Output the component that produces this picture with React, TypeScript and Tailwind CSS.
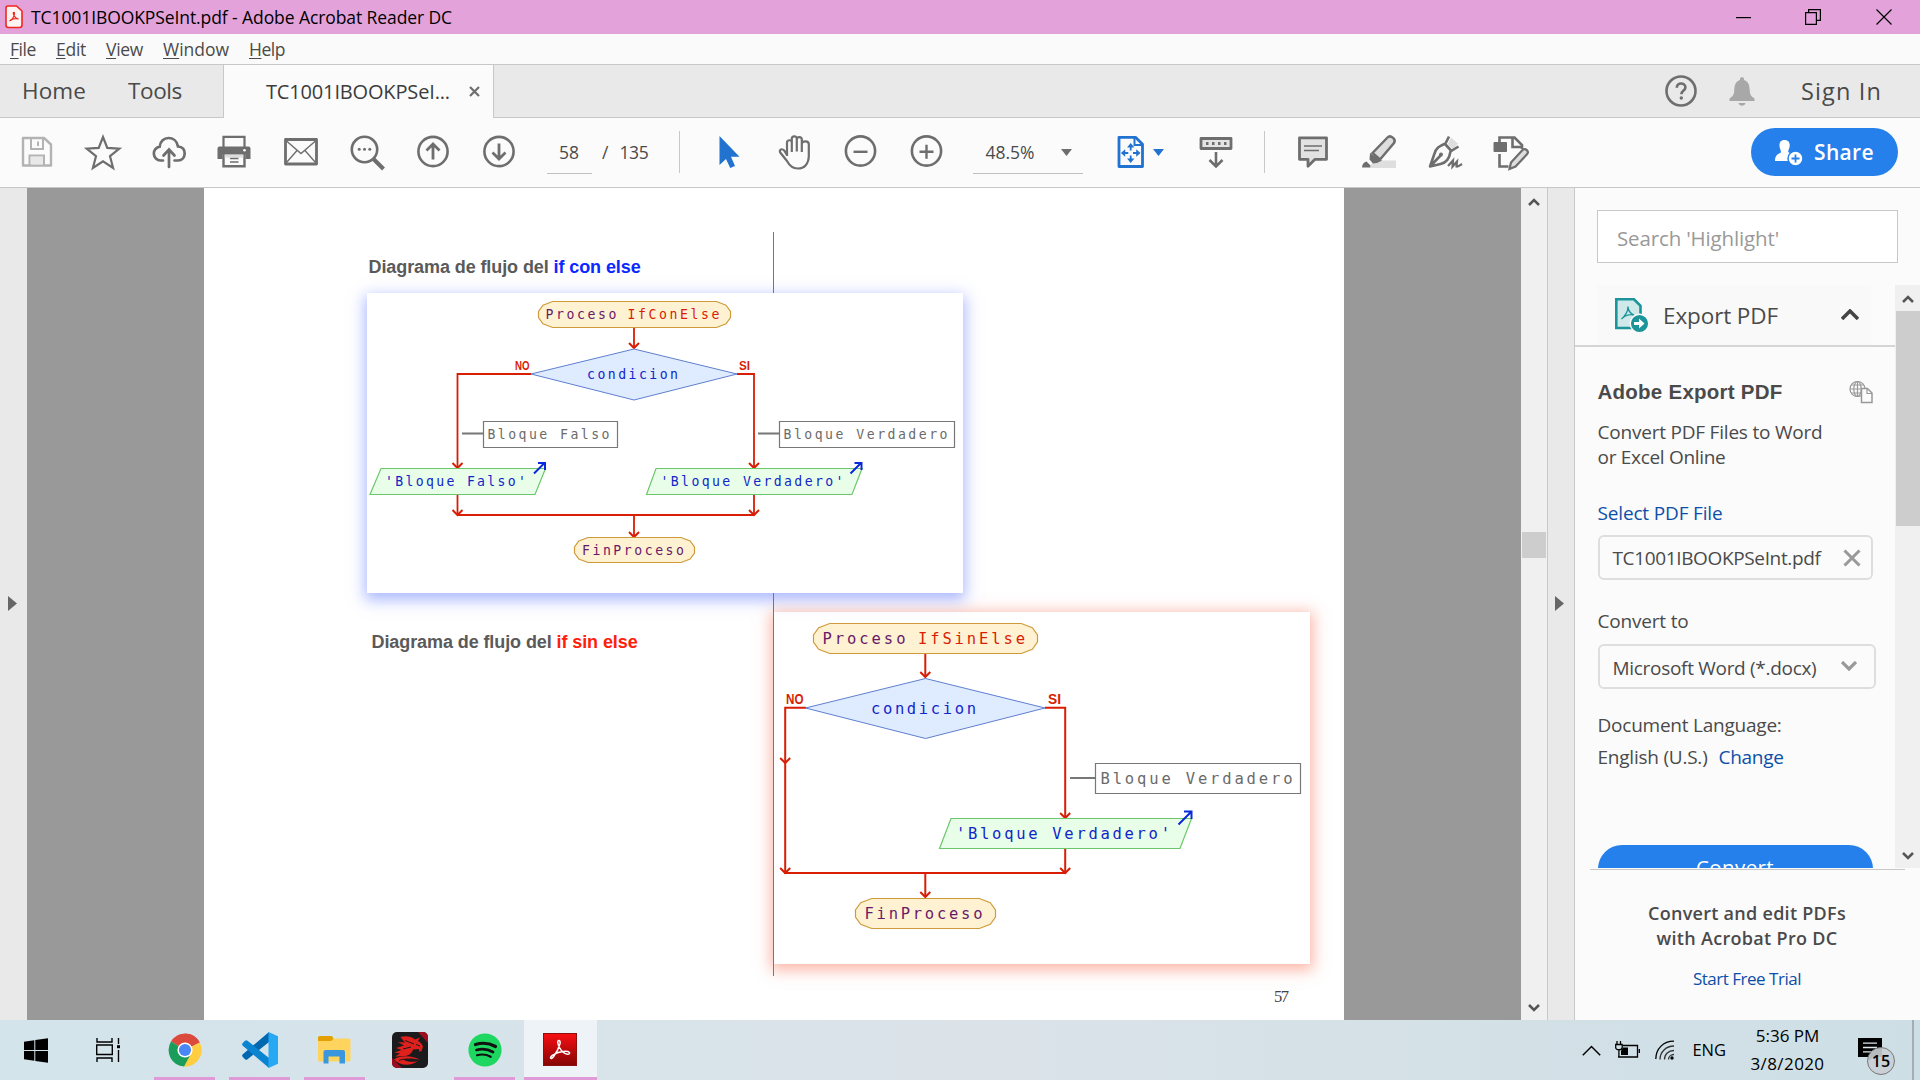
import React from "react";

const G = "#6e6e6e";

function Icon({ children, w = 36, h = 36 }: { children: React.ReactNode; w?: number; h?: number }) {
  return (
    <svg width={w} height={h} viewBox={`0 0 ${w} ${h}`} fill="none" className="block shrink-0 overflow-visible">
      {children}
    </svg>
  );
}

function Slot({ children }: { children: React.ReactNode }) {
  return <div className="flex h-full w-[66px] shrink-0 items-center justify-center">{children}</div>;
}

/* ---------- title, menu and tabs ---------- */

function TitleBar() {
  return (
    <div className="flex h-[34px] items-center bg-[#e3a3da] pl-[5px] text-black">
      <svg width="18" height="24" viewBox="0 0 18 24" fill="none">
        <path d="M3 1h8.500L17 6v14a2.500 2.500 0 0 1-2.500 2.500h-11A2.500 2.500 0 0 1 1 20V3a2 2 0 0 1 2-2z" fill="#fff4f4" stroke="#f0261c" strokeWidth="1.600" />
        <path d="M4.500 16c2-.6 4.600-3.500 5-7.500.1-1.500-1.600-1.500-1.200.2.6 2.800 3 5.300 5.400 5.300M4.500 16c1.500-2 6-3 9-2" stroke="#f0261c" strokeWidth="1.200" />
      </svg>
      <span className="ml-[8px] whitespace-nowrap text-[17.500px] tracking-[-0.09px]">TC1001IBOOKPSeInt.pdf - Adobe Acrobat Reader DC</span>
      <div className="ml-auto flex items-center">
        <svg width="16" height="16" viewBox="0 0 16 16" className="mr-[53px]"><path d="M0 8h15v1.200H0z" fill="#000" /></svg>
        <svg width="16" height="16" viewBox="0 0 16 16" fill="none" stroke="#000" strokeWidth="1.200" className="mr-[55px]">
          <path d="M.6 3.600h10.800v11.800H.6zM3.600 3.600V.6h11.800v10.800h-3.800" />
        </svg>
        <svg width="16" height="16" viewBox="0 0 16 16" fill="none" stroke="#000" strokeWidth="1.200" className="mr-[28px]">
          <path d="M.5.5l15 15M15.500.5l-15 15" />
        </svg>
      </div>
    </div>
  );
}

function MenuBar() {
  return (
    <div className="flex h-[30px] whitespace-nowrap bg-[#fafafa] pl-[10px] text-[17.500px] leading-[30px] text-[#4a4a4a]">
      <div className="w-[46px] tracking-[-0.430px]"><u className="underline-offset-2">F</u>ile</div>
      <div className="w-[50px] tracking-[-0.280px]"><u className="underline-offset-2">E</u>dit</div>
      <div className="w-[57px] tracking-[-0.310px]"><u className="underline-offset-2">V</u>iew</div>
      <div className="w-[86px]"><u className="underline-offset-2">W</u>indow</div>
      <div className="tracking-[-0.460px]"><u className="underline-offset-2">H</u>elp</div>
    </div>
  );
}

function TabBar() {
  return (
    <div className="flex h-[54px] border-y border-[#c8c8c8] bg-[#e9e9e9] text-[#4a4a4a]">
      <div className="flex w-[223px] whitespace-nowrap pl-[22px] text-[22.500px] leading-[52px]">
        <div className="w-[106px] tracking-[0.100px]">Home</div>
        <span className="tracking-[-0.380px]">Tools</span>
      </div>
      <div className="relative -mb-px flex w-[271px] items-center border-x border-[#c8c8c8] bg-[#fbfbfb] pl-[42px] text-[20px] leading-[52px] text-[#3c3c3c]">
        <span className="whitespace-nowrap tracking-[-0.160px]">TC1001IBOOKPSeI...</span>
        <svg width="11" height="11" viewBox="0 0 11 11" stroke={G} strokeWidth="2.200" className="mb-px ml-auto mr-[13px]"><path d="M1 1l9 9M10 1l-9 9" /></svg>
      </div>
      <div className="ml-auto flex items-center pr-[37px]">
        <Icon>
          <circle cx="18" cy="18" r="14.500" stroke={G} strokeWidth="2.600" />
          <path d="M13.800 14.800c0-5.800 8.600-5.400 8.600-.4 0 3-4 3.300-4 6.800" stroke={G} strokeWidth="2.600" />
          <circle cx="18.300" cy="25" r="1.700" fill={G} />
        </Icon>
        <div className="ml-[25px]">
          <Icon>
            <path d="M16 6c0-2.500 4-2.500 4 0v1c5 1.500 5.500 6 5.800 11 .2 4 1.500 5.500 4.700 7.500V28h-25v-2.500c3.200-2 4.500-3.500 4.700-7.500.3-5 .8-9.500 5.800-11z" fill="#a8a8a8" />
            <path d="M14.500 30h7c-.5 3.600-6.500 3.600-7 0z" fill="#a8a8a8" />
          </Icon>
        </div>
        <span className="ml-[41px] mt-[2px] w-[82px] whitespace-nowrap text-[23.500px] tracking-[1.150px]">Sign In</span>
      </div>
    </div>
  );
}

/* ---------- toolbar ---------- */

function Toolbar() {
  return (
    <div className="flex h-[70px] items-center border-b border-[#c8c8c8] bg-[#fbfbfb] pb-px pl-[4px] text-[17.500px] text-[#4a4a4a]">
      <Slot>
        <Icon>
          <path d="M4 4h21l7 6.500V31.500H4z" stroke="#b3b3b3" strokeWidth="2.400" strokeLinejoin="round" />
          <path d="M12 4v11h12V4M10.500 31V21.500H25V31" stroke="#b3b3b3" strokeWidth="2" />
          <path d="M12 23h12v7.500H12z" fill="#e8e8e8" />
          <path d="M19 7.500v4.500" stroke="#b3b3b3" strokeWidth="2" />
        </Icon>
      </Slot>
      <Slot>
        <Icon>
          <path d="M18 3l4.300 10.900 12 .7-9.300 7.600 3.100 11.800L18 27.400 7.900 34 11 22.200 1.700 14.600l12-.7z" stroke={G} strokeWidth="2.200" />
        </Icon>
      </Slot>
      <Slot>
        <Icon>
          <path d="M12 26.500H9.500a7 7 0 0 1-.8-13.900C9.500 1.500 25 .8 27 12.500c9.300 0 8.500 14 0 14h-3.500" stroke={G} strokeWidth="2.700" strokeLinecap="round" />
          <path d="M18 33V16.500M12.500 21.500l5.500-6 5.500 6" stroke={G} strokeWidth="2.700" strokeLinecap="round" />
        </Icon>
      </Slot>
      <Slot>
        <div className="mr-[3px]">
          <Icon>
            <path d="M7.500 14V2.800h21V14" stroke={G} strokeWidth="2.200" />
            <path d="M3.500 12.500h29a2 2 0 0 1 2 2V25h-5v-5h-23v5h-5V14.500a2 2 0 0 1 2-2z" fill={G} />
            <circle cx="28.500" cy="16.300" r="1.300" fill="#fff" />
            <path d="M7.500 19.500h21v12.700h-21z" fill="#fbfbfb" stroke={G} strokeWidth="2.400" />
            <path d="M8.700 20.500h18.600v3H8.700z" fill="#ddd" />
            <path d="M14 24.500h8.500M14 28h8.500" stroke={G} strokeWidth="1.400" />
          </Icon>
        </div>
      </Slot>
      <Slot>
        <Icon>
          <path d="M2.500 5.500h31v24.500h-31z" stroke={G} strokeWidth="2.800" strokeLinejoin="round" />
          <path d="M3.500 7L18 19.500 32.500 7M3.500 28.500L14 16.500M32.500 28.500L22 16.500" stroke={G} strokeWidth="1.400" />
        </Icon>
      </Slot>
      <Slot>
        <Icon>
          <circle cx="15.500" cy="15.500" r="12.700" stroke={G} strokeWidth="2.600" />
          <path d="M24.500 25l10 10" stroke={G} strokeWidth="4" />
          <circle cx="10.200" cy="15.200" r="1.500" fill={G} /><circle cx="15.500" cy="15.200" r="1.500" fill={G} /><circle cx="20.800" cy="15.200" r="1.500" fill={G} />
        </Icon>
      </Slot>
      <Slot>
        <Icon>
          <circle cx="18" cy="17.500" r="14.600" stroke={G} strokeWidth="2.600" />
          <path d="M18 25.500V11M11.500 16.500L18 10l6.500 6.500" stroke={G} strokeWidth="2.800" />
        </Icon>
      </Slot>
      <Slot>
        <Icon>
          <circle cx="18" cy="17.500" r="14.600" stroke={G} strokeWidth="2.600" />
          <path d="M18 9.500V24M11.500 18.500L18 25l6.500-6.500" stroke={G} strokeWidth="2.800" />
        </Icon>
      </Slot>
      <div className="ml-[15px] mt-[3px] flex h-[40px] w-[45px] items-center justify-center border-b border-[#c0c0c0] pb-px pr-px">58</div>
      <span className="ml-[10px]">/</span>
      <span className="ml-[11px] w-[29px] whitespace-nowrap tracking-[-0.340px]">135</span>
      <div className="ml-[31px] h-[42px] w-px bg-[#c8c8c8]" />
      <div className="ml-[16px] flex h-full">
        <Slot>
          <Icon>
            <path d="M9 2.500v29l6.500-6 4.200 9 4.800-2-4-9.300h8.500z" fill="#2173cf" transform="translate(-.5 -.5)" />
          </Icon>
        </Slot>
        <Slot>
          <Icon>
            <path d="M10 22V8.500c0-3 4.800-3 4.800 0V18M14.800 15V4.800c0-3.300 5-3.300 5 0v12.700M19.800 15V5.500c0-3.200 5-3.200 5 0V18M24.800 17V9.800c0-3.300 7-3.300 7 .5v11.500c0 8-4.500 12.700-11 12.700-5.500 0-8.300-2.800-10.800-7.500L3.200 18.500c-1.500-3.300 2-4.200 4-2L10 21" stroke={G} strokeWidth="2.200" strokeLinejoin="round" />
          </Icon>
        </Slot>
        <Slot>
          <Icon>
            <circle cx="17.500" cy="17" r="14.600" stroke={G} strokeWidth="2.600" />
            <path d="M10.500 17.800h14" stroke={G} strokeWidth="2.400" />
          </Icon>
        </Slot>
        <Slot>
          <Icon>
            <circle cx="17.500" cy="17" r="14.600" stroke={G} strokeWidth="2.600" />
            <path d="M10.500 17.800h14M17.500 10.800v14" stroke={G} strokeWidth="2.400" />
          </Icon>
        </Slot>
      </div>
      <div className="ml-[13px] mt-[3px] flex h-[40px] w-[110px] items-center border-b border-[#c0c0c0] pb-px pl-[12px]">
        <span className="whitespace-nowrap">48.5%</span>
        <svg width="11" height="7" viewBox="0 0 11 7" className="ml-auto mr-[11px]"><path d="M0 0h11L5.500 7z" fill={G} /></svg>
      </div>
      <div className="ml-[30px] flex items-center">
        <Icon>
          <path d="M6 3.300h16.500l7 7V32.500H6z" stroke="#2173cf" strokeWidth="2.800" strokeLinejoin="round" />
          <path d="M21.500 3.500v7.500h7.500" stroke="#2173cf" strokeWidth="2" />
          <path d="M17.700 9l3.700 4.500H14zM17.700 29l3.700-4.500H14zM7.900 19l4.300-3.700v7.400zM27.500 19l-4.300-3.700v7.400z" fill="#2173cf" />
          <path d="M17.700 12v4.500M17.700 21.500V26M11 19h4.300M20 19h4.300" stroke="#2173cf" strokeWidth="1.800" />
        </Icon>
        <svg width="11" height="7" viewBox="0 0 11 7" className="ml-[4px]"><path d="M0 0h11L5.500 7z" fill="#2173cf" /></svg>
      </div>
      <div className="ml-[34px]">
        <Icon>
          <path d="M3 4.500h30v10H3z" fill="#e4e4e4" stroke={G} strokeWidth="2.800" strokeLinejoin="round" />
          <path d="M8 9.500h2.500M14 9.500h2.500M20 9.500h2.500M26 9.500h2.500" stroke={G} strokeWidth="3" />
          <path d="M18 18v14M11.500 26l6.500 6.500 6.500-6.500" stroke={G} strokeWidth="2.600" />
        </Icon>
      </div>
      <div className="ml-[30px] h-[42px] w-px bg-[#c8c8c8]" />
      <div className="ml-[15px] flex h-full">
        <Slot>
          <Icon>
            <path d="M4.500 3.800h27v21.500H20l-7 7v-7H4.500z" fill="#e2e2e2" stroke={G} strokeWidth="2.800" strokeLinejoin="round" />
            <path d="M9 12h18M9 16.500h15" stroke={G} strokeWidth="1.500" />
          </Icon>
        </Slot>
        <Slot>
          <Icon>
            <path d="M13 26.500h22V34H8z" fill="#dedede" />
            <path d="M11.500 19L26.500 3.500c3-3 9 1.500 6.500 5.500L19 25.500z" fill="#dedede" stroke={G} strokeWidth="2.500" />
            <path d="M9 19l12 7.500-5 2.500-4 .5-3.500-4z" fill={G} />
            <path d="M1 33.500c0-3 2-5.500 4.500-6l4 4-.5 2z" fill={G} />
          </Icon>
        </Slot>
        <Slot>
          <Icon>
            <path d="M21 10l3-6.500 7 6-5 6z" fill="#dedede" />
            <path d="M22 2.500l-3.500 7c-6 2.500-10 4.500-11.500 11.500L3 32.500 13.500 30c5.500-1 9-6 10-12.500l8-5M18 10l6 6.500M3.500 32L14 21" stroke={G} strokeWidth="2.600" strokeLinejoin="round" />
            <circle cx="14" cy="20.500" r="2" fill={G} />
            <path d="M21 32l5-5.500-.5 6 4.500-5-.5 5c2 .5 4-1.500 5.500-2.500" stroke={G} strokeWidth="2.200" />
          </Icon>
        </Slot>
        <Slot>
          <Icon>
            <path d="M6.500 9V3.500h15L29 11v4M19.500 3.500V13H29M6.500 20v12.500h9" stroke={G} strokeWidth="2.600" />
            <path d="M1 8.500h12.500v9H1z" fill={G} stroke={G} strokeWidth="1" />
            <path d="M18 28.500l11.500-12.500c3-2.500 7 1.500 4.500 4.200L22.500 32.500 16.500 35z" fill="#dedede" stroke={G} strokeWidth="2.200" />
          </Icon>
        </Slot>
      </div>
      <button className="ml-auto mr-[22px] flex h-[48px] w-[147px] items-center rounded-full bg-[#2680eb] pl-[24px] text-white">
        <svg width="28" height="27" viewBox="0 0 28 27" fill="none">
          <path d="M9.500 1c4.200 0 5.500 3 5.200 6-.2 2.500-1.500 4-1.500 6l4 2.500-3 6.500H0c0-5 2-6.500 6-8.500 0-2.500-1.500-4-1.500-6.500C4.200 4 5.300 1 9.500 1z" fill="#fff" />
          <circle cx="20.500" cy="19.500" r="7.500" fill="#fff" stroke="#2680eb" strokeWidth="1.500" />
          <path d="M16.500 19.500h8M20.500 15.500v8" stroke="#2680eb" strokeWidth="1.800" />
        </svg>
        <span className="ml-[11px] mt-px whitespace-nowrap text-[21px] font-semibold tracking-[0.350px]">Share</span>
      </button>
    </div>
  );
}

/* ---------- flow chart parts ---------- */

const RED = "#d81e05";
const MONO = "'DejaVu Sans Mono', monospace";
const NARROW = 0.94;

/* Narrow letters set wide apart, as the chart's own monospace face has them. */
function Txt({ x, y, w, s, size, fill }: { x: number; y: number; w: number; s: string; size: number; fill: string }) {
  return (
    <text
      transform={`translate(${x} ${y}) scale(${NARROW} 1)`}
      textLength={(w - 1) / NARROW}
      fontSize={size}
      fill={fill}
      fontFamily={MONO}
      xmlSpace="preserve"
    >
      {s}
    </text>
  );
}

function Branch({ x, y, w, s, size }: { x: number; y: number; w: number; s: string; size: number }) {
  return (
    <text x={x} y={y} textLength={w} lengthAdjust="spacingAndGlyphs" fontSize={size} fill={RED} fontFamily="'Liberation Sans', sans-serif" fontWeight={700}>
      {s}
    </text>
  );
}

function Terminal({ x1, x2, y1, y2 }: { x1: number; x2: number; y1: number; y2: number }) {
  const h = y2 - y1;
  const m = (y1 + y2) / 2;
  const c = h * 0.54;
  const i = c * 0.32;
  const j = h * 0.14;
  const f = h * 0.12;
  return (
    <polygon
      points={`${x1 + c},${y1} ${x2 - c},${y1} ${x2 - i},${y1 + j} ${x2},${m - f} ${x2},${m + f} ${x2 - i},${y2 - j} ${x2 - c},${y2} ${x1 + c},${y2} ${x1 + i},${y2 - j} ${x1},${m + f} ${x1},${m - f} ${x1 + i},${y1 + j}`}
      fill="#fff2d2" stroke="#cf9a3a" strokeWidth="1.200"
    />
  );
}

function Head({ x, y, r = 5 }: { x: number; y: number; r?: number }) {
  return <path d={`M${x - r} ${y - r}L${x} ${y}L${x + r} ${y - r}`} fill="none" stroke={RED} strokeWidth="2" />;
}

function ChartConElse() {
  return (
    <svg width="596" height="300" viewBox="367 293 596 300" className="block">
      <Terminal x1={538.500} x2={730.500} y1={301.500} y2={327.500} />
      <Txt x={545.500} y={319} w={72} s="Proceso" size={14} fill="#681a68" />
      <Txt x={627.500} y={319} w={93} s="IfConElse" size={14} fill={RED} />
      <path d="M634 328v20M531 374H457.500V468M737 374h17V468M457.500 495v20M754 495v20M457 515h297M634 515v22" stroke={RED} strokeWidth="1.800" fill="none" />
      <Head x={634} y={348} /><Head x={457.500} y={468} /><Head x={754} y={468} />
      <Head x={457.500} y={515} /><Head x={754} y={515} /><Head x={634} y={537} />
      <polygon points="634,349 737,374 634,400 531,374" fill="#dfebff" stroke="#5f7fd0" />
      <Txt x={587} y={379} w={92} s="condicion" size={14} fill="#1226c8" />
      <Branch x={515} y={370} w={14.500} s="NO" size={12.500} />
      <Branch x={739} y={370} w={11} s="SI" size={12.500} />
      <path d="M462 433.500h21M758 433.500h21.500" stroke="#777" strokeWidth="2" />
      <path d="M483.500 421.500h134v26h-134zM779.500 421.500h175v26h-175z" fill="#fff" stroke="#777" strokeWidth="1.200" />
      <Txt x={487.500} y={439} w={123} s="Bloque Falso" size={14} fill="#6b6b6b" />
      <Txt x={783.500} y={439} w={165} s="Bloque Verdadero" size={14} fill="#6b6b6b" />
      <path d="M381 468.500h164.500l-10.500 26H370zM656 468.500h206l-10 26H646.500z" fill="#e8fee8" stroke="#6cc76c" strokeWidth="1.200" />
      <Txt x={385} y={486} w={142} s="'Bloque Falso'" size={14} fill="#1226c8" />
      <Txt x={660.500} y={486} w={184} s="'Bloque Verdadero'" size={14} fill="#1226c8" />
      <path d="M534 473.500L544.500 463M538 463h7v7M850.500 473.500L861 463M854.500 463h7v7" stroke="#0a28dc" strokeWidth="2" fill="none" />
      <Terminal x1={574.500} x2={694.500} y1={537.500} y2={562.500} />
      <Txt x={582} y={555} w={103} s="FinProceso" size={14} fill="#681a68" />
    </svg>
  );
}

function ChartSinElse() {
  return (
    <svg width="536" height="352" viewBox="774 612 536 352" className="block">
      <Terminal x1={813.500} x2={1037.500} y1={623.500} y2={653.500} />
      <Txt x={822.500} y={644} w={84} s="Proceso" size={16.500} fill="#681a68" />
      <Txt x={918} y={644} w={108} s="IfSinElse" size={16.500} fill={RED} />
      <path d="M925.300 654v23M806 707.700H785.200V873M1045 707.700h20.200V818M1065.200 849v24M784.200 873h282M925.300 873v24" stroke={RED} strokeWidth="2" fill="none" />
      <Head x={925.300} y={677} /><Head x={785.200} y={763} /><Head x={785.200} y={873} />
      <Head x={1065.200} y={818} /><Head x={1065.200} y={873} /><Head x={925.300} y={897} />
      <polygon points="925.500,678.500 1045,708 925.500,738.500 805.500,708" fill="#dfebff" stroke="#5f7fd0" />
      <Txt x={871} y={714} w={106} s="condicion" size={16.500} fill="#1226c8" />
      <Branch x={786} y={703.500} w={17.500} s="NO" size={15} />
      <Branch x={1048} y={703.500} w={13} s="SI" size={15} />
      <path d="M1070 778h25" stroke="#777" strokeWidth="2" />
      <path d="M1095.500 763.500h205v30h-205z" fill="#fff" stroke="#777" strokeWidth="1.200" />
      <Txt x={1100.500} y={784} w={193} s="Bloque Verdadero" size={16.500} fill="#6b6b6b" />
      <path d="M951 818.500h240.500l-11.500 30H939.500z" fill="#e8fee8" stroke="#6cc76c" strokeWidth="1.200" />
      <Txt x={956} y={839} w={215} s="'Bloque Verdadero'" size={16.500} fill="#1226c8" />
      <path d="M1178.500 824.500L1191 812M1184 811.500h7.500v7.500" stroke="#0a28dc" strokeWidth="2" fill="none" />
      <Terminal x1={855.500} x2={995.500} y1={898.500} y2={928.500} />
      <Txt x={864.500} y={919} w={119} s="FinProceso" size={16.500} fill="#681a68" />
    </svg>
  );
}

/* The PDF page is a free canvas, its origin at the sheet's top left corner. */
function PdfPage() {
  return (
    <div className="relative h-full w-[1140px] overflow-hidden bg-white font-['Liberation_Sans',sans-serif]">
      <div className="absolute left-[570px] top-[424px] h-[352px] w-[536px] bg-white shadow-[0_3px_14px_3px_rgba(250,110,80,0.5)]">
        <ChartSinElse />
      </div>
      <div className="absolute left-[569px] top-[44px] h-[744px] w-px bg-[#777]" />
      <div className="absolute left-[163px] top-[105px] h-[300px] w-[596px] bg-white shadow-[0_5px_14px_2px_rgba(90,115,255,0.5)]">
        <ChartConElse />
      </div>
      <p className="absolute left-[164.500px] top-[67px] whitespace-nowrap text-[18px] font-bold leading-[24px] tracking-[-0.090px] text-[#5a5a5a]">
        Diagrama de flujo del <span className="text-[#0a28ff]">if con else</span>
      </p>
      <p className="absolute left-[167.500px] top-[442px] whitespace-nowrap text-[18px] font-bold leading-[24px] tracking-[-0.090px] text-[#5a5a5a]">
        Diagrama de flujo del <span className="text-[#ff1e0a]">if sin else</span>
      </p>
      <span className="absolute left-[1070px] top-[799px] font-['Liberation_Serif',serif] text-[16.500px] leading-[20px] tracking-[-1.500px] text-[#444]">57</span>
    </div>
  );
}

/* ---------- side areas ---------- */

function Chevron({ up, size = 12, color = "#555", sw = 2.500 }: { up?: boolean; size?: number; color?: string; sw?: number }) {
  return (
    <svg width={size} height={size / 2 + 2} viewBox={`0 0 ${size} ${size / 2 + 2}`} fill="none" stroke={color} strokeWidth={sw}>
      <path d={up ? `M1 ${size / 2 + 1}L${size / 2} 2L${size - 1} ${size / 2 + 1}` : `M1 1L${size / 2} ${size / 2}L${size - 1} 1`} />
    </svg>
  );
}

function DocScroll() {
  return (
    <div className="flex w-[27px] flex-col items-center border-r border-[#c8c8c8] bg-[#f0f0f0] pb-[8px] pt-[10px]">
      <Chevron up />
      <div className="mt-[326px] h-[26px] w-[24px] bg-[#cdcdcd]" />
      <div className="mt-auto"><Chevron /></div>
    </div>
  );
}

function ToolsPanel() {
  return (
    <div className="flex w-[345px] flex-col bg-[#fbfbfb] text-[#4a4a4a]">
      <div className="ml-[22px] mt-[22px] flex h-[53px] w-[301px] items-center border border-[#c8c8c8] bg-white pl-[19px] pt-[3px]">
        <span className="whitespace-nowrap text-[20.500px] tracking-[-0.140px] text-[#999]">Search 'Highlight'</span>
      </div>
      <div className="mt-[22px] flex h-[583px] overflow-hidden">
        <div className="w-[320px]">
          <div className="border-b-2 border-[#d5d5d5]">
            <div className="ml-[22px] flex h-[60px] w-[274px] items-center bg-[#f9f9f9] pb-px pl-[18px] pr-[12px]">
              <svg width="34" height="36" viewBox="0 0 34 36" fill="none">
                <path d="M1.300 2.300h17.700l6.500 6.500V31H1.300z" fill="#cfe8ea" stroke="#1b959a" strokeWidth="2.600" />
                <path d="M6.500 22c3-2 7-8 6.500-12.500M6.500 22c3-3 8-5 12.500-4M13 10c0 3 2.500 7 6 8" stroke="#1b959a" strokeWidth="1.400" />
                <circle cx="24.500" cy="26.500" r="9.300" fill="#1b959a" stroke="#fafafa" strokeWidth="1.500" />
                <path d="M19 25h5v-3.500l5.500 5-5.500 5V28h-5z" fill="#fff" />
              </svg>
              <span className="ml-[14px] mt-[3px] whitespace-nowrap text-[22.500px] tracking-[-0.110px]">Export PDF</span>
              <div className="ml-auto"><Chevron up size={18} sw={3.500} color="#444" /></div>
            </div>
          </div>
          <div className="whitespace-nowrap pl-[22.500px] pt-[33px] text-[19px] leading-[25px]">
            <div className="flex h-[24px] items-center justify-between pr-[22px] font-['Liberation_Sans',sans-serif] text-[20.500px] font-bold leading-[24px]">
              <span className="tracking-[0.250px]">Adobe Export PDF</span>
              <svg width="24" height="24" viewBox="0 0 24 24" fill="none" stroke="#999" strokeWidth="1.200">
                <circle cx="8.500" cy="9" r="7.500" />
                <ellipse cx="8.500" cy="9" rx="3.700" ry="7.500" />
                <path d="M8.500 1.500v15M1 9h15M2.500 5h12M2.500 13h12" />
                <path d="M12.500 8.500h6l4.500 4.500v9.500H12.500z" fill="#fbfbfb" strokeWidth="1.500" />
                <path d="M18 8.500V13.500h5" />
              </svg>
            </div>
            <div className="mt-[16px] tracking-[-0.210px]">Convert PDF Files to Word</div>
            <div className="tracking-[-0.300px]">or Excel Online</div>
            <div className="mt-[31px] tracking-[-0.160px] text-[#0d4fa8]">Select PDF File</div>
            <div className="mt-[9px] flex h-[45px] w-[275px] items-center rounded-[6px] border-2 border-[#dedede] pl-[13px] pr-[10px]">
              <span className="mt-[2px] tracking-[-0.360px]">TC1001IBOOKPSeInt.pdf</span>
              <svg width="18" height="18" viewBox="0 0 18 18" stroke="#999" strokeWidth="3" className="ml-auto"><path d="M1.500 1.500l15 15M16.500 1.500l-15 15" /></svg>
            </div>
            <div className="mt-[29px] tracking-[-0.190px]">Convert to</div>
            <div className="mt-[10px] flex h-[45px] w-[278px] items-center rounded-[6px] border-2 border-[#dedede] pl-[13px] pr-[17px]">
              <span className="mt-[3px] tracking-[-0.300px]">Microsoft Word (*.docx)</span>
              <div className="mb-px ml-auto"><Chevron size={16} color="#999" sw={3.200} /></div>
            </div>
            <div className="mt-[24px] tracking-[-0.230px]">Document Language:</div>
            <div className="mt-[7px] flex">
              <div className="w-[121px] tracking-[-0.230px]">English (U.S.)</div>
              <span className="tracking-[-0.300px] text-[#0d4fa8]">Change</span>
            </div>
            <div className="mt-[75px] flex h-[48px] w-[275px] items-center justify-center rounded-full bg-[#2680eb] pb-[4px] text-[20.500px] tracking-[0.400px] text-white">
              Convert
            </div>
          </div>
        </div>
        <div className="flex w-[25px] flex-col items-center bg-[#f0f0f0] pb-[8px] pt-[10px]">
          <Chevron up />
          <div className="mt-[8px] h-[215px] w-[24px] bg-[#cdcdcd]" />
          <div className="mt-auto"><Chevron /></div>
        </div>
      </div>
      <div className="mx-[15px] mt-px h-px bg-[#c8c8c8]" />
      <div className="mt-[31px] flex flex-col items-center whitespace-nowrap pr-px text-[18px] leading-[25px]">
        <span className="font-semibold tracking-[0.280px]">Convert and edit PDFs</span>
        <span className="font-semibold tracking-[0.310px]">with Acrobat Pro DC</span>
        <span className="mt-[15px] text-[17px] tracking-[-0.480px] text-[#0d4fa8]">Start Free Trial</span>
      </div>
    </div>
  );
}

/* ---------- taskbar ---------- */

function TaskItem({ children, active, running = true }: { children: React.ReactNode; active?: boolean; running?: boolean }) {
  return (
    <div className={active ? "flex h-full w-[73px] flex-col items-center bg-[#eef3f7]" : "flex h-full w-[75px] flex-col items-center"}>
      <div className="flex h-[57px] items-center pt-[3px]">{children}</div>
      {running && <div className={active ? "h-[3px] w-full bg-[#e09ad8]" : "h-[3px] w-[61px] bg-[#e09ad8]"} />}
    </div>
  );
}

function Taskbar() {
  return (
    <div className="flex h-[60px] bg-linear-to-r from-[#d3e4eb] via-[#dbe3e9] to-[#cddfe5] text-black">
      <div className="flex h-full w-[72px] items-center justify-center">
        <svg width="24" height="25" viewBox="0 0 24 25"><path d="M0 3.700l10.300-1.500v9.800H0zM11.300 2.100L24 .3v11.700H11.300zM0 13h10.300v9.800L0 21.300zM11.300 13H24v11.700l-12.700-1.800z" /></svg>
      </div>
      <div className="flex h-full w-[72px] items-center justify-center">
        <svg width="24" height="24" viewBox="0 0 24 24" fill="none" stroke="#000" strokeWidth="1.400">
          <path d="M1 0v4h15V0M1 24v-4h15v4M.7 7h15.600v9.500H.7zM22.500 0v6M22.500 12v12" />
          <path d="M22.500 7.200v3" strokeWidth="3" />
        </svg>
      </div>
      <div className="ml-[3px] flex h-full">
        <TaskItem>
          <svg width="34" height="34" viewBox="0 0 34 34">
            <path d="M17 17L3 8.400A16.600 16.600 0 0 1 31.700 9.400z" fill="#dc4a3e" />
            <path d="M17 17l14.700-7.600A16.600 16.600 0 0 1 16 33.600z" fill="#ffcd41" />
            <path d="M17 17l5.500 4.500L16 33.600A16.600 16.600 0 0 1 3 8.400z" fill="#1a9c5a" />
            <path d="M17 9.400h14.700A16.600 16.600 0 0 0 17 .4z" fill="#dc4a3e" />
            <circle cx="17" cy="17" r="7.600" fill="#fff" /><circle cx="17" cy="17" r="6.100" fill="#4a86f5" />
          </svg>
        </TaskItem>
        <TaskItem>
          <svg width="36" height="36" viewBox="0 0 36 36">
            <path d="M27 0v10L5.500 27.300a2 2 0 0 1-2.500 0L.8 25a2 2 0 0 1 0-2.800z" fill="#0068b0" />
            <path d="M27 36V26L5.500 8.700a2 2 0 0 0-2.500 0L.8 11a2 2 0 0 0 0 2.800z" fill="#0a84d0" />
            <path d="M26.500 0L36 4.200v27.600L26.500 36z" fill="#27a8f3" />
          </svg>
        </TaskItem>
        <TaskItem>
          <svg width="33" height="28" viewBox="0 0 33 28">
            <path d="M0 1.500A1.500 1.500 0 0 1 1.500 0H14l1.500 2.500L14 6H0z" fill="#e3a000" />
            <path d="M0 5h13l3-2.500h15A1.500 1.500 0 0 1 32.500 4v20a1.500 1.500 0 0 1-1.500 1.500H1.500A1.500 1.500 0 0 1 0 24z" fill="#ffd45e" />
            <path d="M5.500 27.500V16a2 2 0 0 1 2-2h17.500a2 2 0 0 1 2 2v11.500h-5.500V20.500h-11v7z" fill="#3a97dd" />
          </svg>
        </TaskItem>
        <TaskItem running={false}>
          <svg width="36" height="36" viewBox="0 0 36 36">
            <rect width="36" height="36" rx="5" fill="#1b1b1d" />
            <path d="M26 0h5a5 5 0 0 1 5 5v6M10 36H5a5 5 0 0 1-5-5v-5" fill="#9d0d20" />
            <path d="M10 7L8.500 5c5-1.500 11-.5 14.500 2.500l5-2-2 3.500c2.500 1 4 3 5 5.500l-1.500 4.500-2 .8-.8-2.800-5.700.5c-1 4-4 5.700-8 6.500L3 24.500l5-3-5.500-1 7-2.500L4 16l8-2.500-6-3.500 7 .5z" fill="#e0201c" />
            <path d="M2 27.500c6-4.500 19-4 26 .5-6-1.500-12-2-17-.5 4 2.500 10 3 14.500 1.500C19 34.500 8 34 2 27.500z" fill="#e0201c" />
            <path d="M7 28.500c4-2 10-1.500 15 .5M13 8.500l9 3.500M11 17l8-2M24 12.500l4 1.500" stroke="#1b1b1d" fill="none" />
          </svg>
        </TaskItem>
        <TaskItem>
          <svg width="34" height="34" viewBox="0 0 34 34" fill="none" stroke="#111" strokeLinecap="round">
            <circle cx="17" cy="17" r="16.600" fill="#1ed760" stroke="none" />
            <path d="M7.500 11.500c6.500-2 14-1.300 20 2" strokeWidth="3.200" />
            <path d="M8.500 17c5.500-1.500 11.500-.9 16.500 2" strokeWidth="2.700" />
            <path d="M9 22.200c4.700-1.200 9.500-.8 13.700 1.600" strokeWidth="2.200" />
          </svg>
        </TaskItem>
        <div className="ml-[2px] h-full">
          <TaskItem active>
            <svg width="34" height="34" viewBox="0 0 34 34" fill="none" className="mr-px">
              <defs><linearGradient id="pdf" x1="0" y1="0" x2="0" y2="1"><stop offset="0" stopColor="#f80f12" /><stop offset="1" stopColor="#860505" /></linearGradient></defs>
              <rect x=".5" y=".5" width="33" height="32" fill="url(#pdf)" stroke="#8d1010" />
              <path d="M16 7.500c-2 0-1.500 3 .5 7 2 3.700 5 6.500 8 6.700 3.500 0 2.500-3.200-2-3-5 .2-10 2-13.500 4.500-3 2.300-1 4.300 1.500 1 3-4 5.500-9.500 6.500-13 .4-2-.2-3.200-1-3.200z" stroke="#fff" strokeWidth="1.500" />
            </svg>
          </TaskItem>
        </div>
      </div>
      <div className="ml-auto flex h-full items-center">
        <svg width="19" height="11" viewBox="0 0 19 11" fill="none" stroke="#000" strokeWidth="1.500" className="mr-[14px]"><path d="M.8 10.200L9.500 1.500l8.700 8.700" /></svg>
        <svg width="25" height="18" viewBox="0 0 25 18" fill="none" stroke="#000" strokeWidth="1.300" className="mr-[15px]">
          <path d="M8 4.500h14.500v11.500H3M24.300 8v4M2 0v3.500M5.500 0v3.500M.7 3.500h6.500v3c0 3-6.500 3-6.500 0zM3.900 9v7" />
          <path d="M8 6.500h5v7.500H6V10z" fill="#000" stroke="none" />
        </svg>
        <svg width="20" height="20" viewBox="0 0 20 20" fill="none" stroke="#000" strokeWidth="1.300" className="mr-[17px]">
          <path d="M.8 19C.8 9 8 1.200 19 1.200" /><path d="M5 19.500C5 12 11 6 19 6M9.500 19.500C9.500 14 13.500 10.500 19 10.500M13.500 19.500c0-3 2.500-5 5.500-5" stroke="#333" />
          <circle cx="17" cy="18" r="1.700" fill="#000" stroke="none" />
        </svg>
        <span className="whitespace-nowrap text-[16.500px]">ENG</span>
        <div className="ml-[15px] mr-px flex w-[93px] flex-col items-center whitespace-nowrap text-[17px] leading-[28px]">
          <span>5:36 PM</span>
          <span className="tracking-[0.400px]">3/8/2020</span>
        </div>
        <div className="relative ml-[23px] h-[42px] w-[54px]">
          <svg width="24" height="24" viewBox="0 0 24 24" className="mt-[9px]">
            <path d="M0 0h24v19h-9l-4 4v-4H0z" /><path d="M5 5.200h14M5 9.500h14M5 13.800h10" stroke="#dfe8ee" strokeWidth="1.300" />
          </svg>
          <div className="absolute left-[9px] top-[18px] flex size-[28px] items-center justify-center rounded-full border border-[#777] bg-[#c9cfd4]/90 text-[16px] font-semibold">
            15
          </div>
        </div>
        <div className="h-full w-[2px] bg-[#a3adb8]" />
        <div className="w-[6px]" />
      </div>
    </div>
  );
}

export default function App() {
  return (
    <div className="flex h-[1080px] w-[1920px] flex-col overflow-hidden bg-white font-['Open_Sans','Noto_Sans',sans-serif]">
      <TitleBar />
      <MenuBar />
      <TabBar />
      <Toolbar />
      <div className="flex h-[832px]">
        <div className="flex w-[27px] items-center bg-[#e9e9e9] pb-px pl-[8px]">
          <svg width="9" height="15" viewBox="0 0 9 15"><path d="M0 0l9 7.500L0 15z" fill="#666" /></svg>
        </div>
        <div className="flex w-[1494px] bg-[#999] pl-[177px]"><PdfPage /></div>
        <DocScroll />
        <div className="flex w-[27px] items-center border-r border-[#c8c8c8] bg-[#e9e9e9] pb-px pl-[7px]">
          <svg width="9" height="15" viewBox="0 0 9 15"><path d="M0 0l9 7.500L0 15z" fill="#666" /></svg>
        </div>
        <ToolsPanel />
      </div>
      <Taskbar />
    </div>
  );
}
